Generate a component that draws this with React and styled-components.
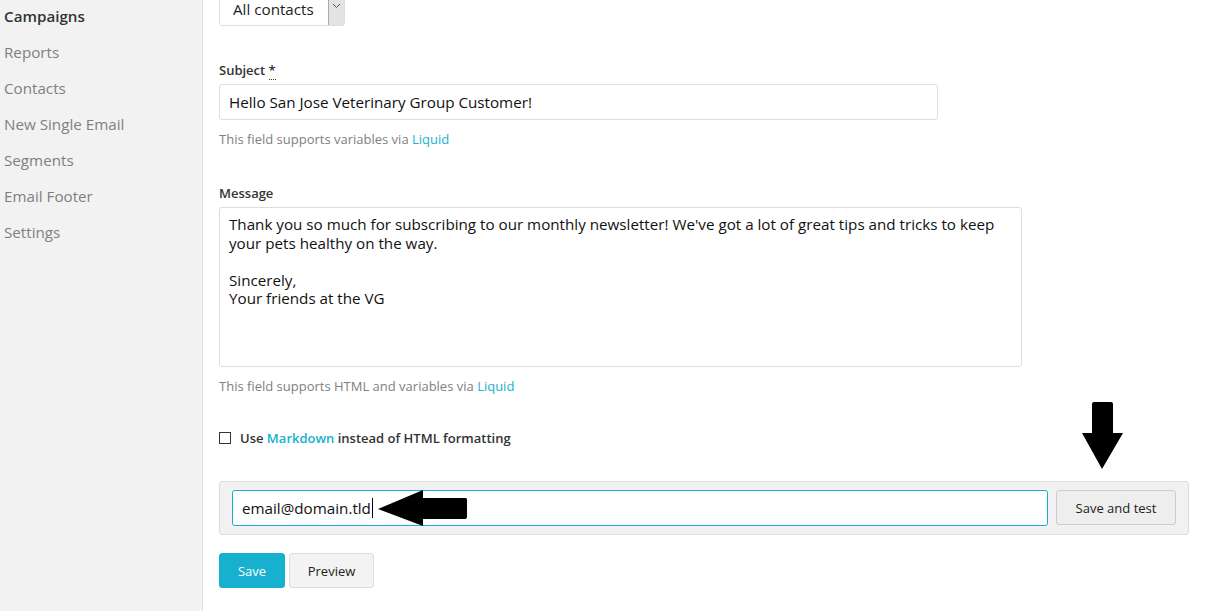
import React from 'react';
import styled, {createGlobalStyle} from "styled-components";

const teal = "#17b1cf";

const GlobalStyle = createGlobalStyle`
body{
margin:0;
background:#fff;
font-family: "Open Sans", "Noto Sans", sans-serif;
color:#222;
overflow:hidden;
}
`

const menu = ["Campaigns", "Reports", "Contacts", "New Single Email", "Segments", "Email Footer", "Settings"]

const App = () => {
    return (
        <Page>
            <GlobalStyle/>
            <Sidebar>
                <Menu>
                    {menu.map((item, i) => (
                        <MenuItem key={item} active={i === 0}>{item}</MenuItem>
                    ))}
                </Menu>
            </Sidebar>
            <Main>
                <SelectBox>
                    <SelectText>All contacts</SelectText>
                    <SelectArrow>
                        <svg width="9" height="6" viewBox="0 0 9 6">
                            <path d="M1 1 L4.5 4.5 L8 1" fill="none" stroke="#555" strokeWidth="1"/>
                        </svg>
                    </SelectArrow>
                </SelectBox>

                <Group>
                    <Label>Subject <Abbr>*</Abbr></Label>
                    <Input width={719}>Hello San Jose Veterinary Group Customer!</Input>
                    <Help>This field supports variables via <Link>Liquid</Link></Help>
                </Group>

                <Group>
                    <Label>Message</Label>
                    <TextArea>
                        Thank you so much for subscribing to our monthly newsletter! We've got a lot of great tips and tricks to keep your pets healthy on the way.
                        {"\n\n"}Sincerely,{"\n"}Your friends at the VG
                    </TextArea>
                    <Help>This field supports HTML and variables via <Link>Liquid</Link></Help>
                </Group>

                <CheckRow>
                    <CheckBox/>
                    <span>Use <Link>Markdown</Link> instead of HTML formatting</span>
                </CheckRow>

                <TestPanel>
                    <TestInput>email@domain.tld<Caret/></TestInput>
                    <Button width={120}>Save and test</Button>
                </TestPanel>

                <Actions>
                    <Button primary width={66}>Save</Button>
                    <Button width={85}>Preview</Button>
                </Actions>
            </Main>

            <ArrowLeft width="90" height="36" viewBox="0 0 90 36">
                <path d="M0 19 L45 0 L45 8 L88 8 Q89 8 89 10 L89 27 Q89 29 87 29 L45 29 L45 36 Z" fill="#000"/>
            </ArrowLeft>
            <ArrowDown width="42" height="70" viewBox="0 0 42 70">
                <path d="M10 2 Q10 0 12 0 L29 0 Q31 0 31 2 L31 31 L41 31 L20 67 L0 31 L10 31 Z" fill="#000"/>
            </ArrowDown>
        </Page>
    );
};

const Page = styled.div`
display:flex;
position:relative;
min-height:100vh;
`
const Sidebar = styled.div`
width:202px;
flex-shrink:0;
background:#f2f2f2;
border-right:1px solid #e2e2e2;
`
const Menu = styled.div`
display:flex;
flex-direction:column;
margin-top:-2px;
`
const MenuItem = styled.div`
height:36px;
line-height:36px;
padding-left:4px;
font-size:15.2px;
color:${props => props.active ? "#333" : "#808080"};
font-weight:${props => props.active ? 600 : 400};
`
const Main = styled.div`
display:flex;
flex-direction:column;
align-items:flex-start;
padding-left:16px;
margin-top:-8px;
`
const SelectBox = styled.div`
display:flex;
width:126px;
height:34px;
box-sizing:border-box;
border:1px solid #ddd;
border-radius:3px;
`
const SelectText = styled.div`
flex:1;
font-size:15.2px;
line-height:32px;
padding-left:13px;
color:#222;
`
const SelectArrow = styled.div`
width:16px;
background:#e3e3e3;
border-left:1px solid #aaa;
display:flex;
justify-content:center;
padding-top:10px;
box-sizing:border-box;
`
const Group = styled.div`
display:flex;
flex-direction:column;
margin-top:35px;
&+&{
margin-top:36px;
}
`
const Label = styled.div`
font-size:13px;
font-weight:600;
line-height:18px;
color:#333;
margin-bottom:5px;
`
const Abbr = styled.span`
border-bottom:1px dotted #333;
`
const Input = styled.div`
width:${props => props.width}px;
height:36px;
box-sizing:border-box;
border:1px solid #ddd;
border-radius:3px;
padding:0 9px;
font-size:15.2px;
line-height:34px;
color:#111;
`
const TextArea = styled.div`
width:803px;
height:160px;
box-sizing:border-box;
border:1px solid #ddd;
border-radius:3px;
padding:7px 9px;
font-size:15.2px;
line-height:18.5px;
white-space:pre-line;
color:#111;
`
const Help = styled.div`
font-size:13px;
line-height:18px;
color:#808080;
margin-top:10px;
`
const Link = styled.span`
color:${teal};
`
const CheckRow = styled.div`
display:flex;
align-items:center;
gap:9px;
margin-top:34px;
font-size:13px;
font-weight:600;
line-height:18px;
color:#333;
`
const CheckBox = styled.div`
width:12px;
height:12px;
border:1px solid #333;
box-sizing:border-box;
`
const TestPanel = styled.div`
display:flex;
gap:8px;
width:970px;
box-sizing:border-box;
margin-top:34px;
padding:8px 12px;
background:#f1f1f1;
border:1px solid #ddd;
border-radius:3px;
`
const TestInput = styled.div`
flex:1;
display:flex;
align-items:center;
height:36px;
box-sizing:border-box;
border:1px solid ${teal};
border-radius:3px;
background:#fff;
padding:0 9px;
font-size:15.2px;
color:#111;
`
const Caret = styled.span`
width:1px;
height:20px;
background:#000;
margin-left:1px;
`
const Button = styled.div`
width:${props => props.width}px;
height:35px;
box-sizing:border-box;
display:flex;
align-items:center;
justify-content:center;
font-size:13px;
border-radius:3px;
border:1px solid ${props => props.primary ? teal : "#ccc"};
background:${props => props.primary ? teal : "#eee"};
color:${props => props.primary ? "#fff" : "#222"};
`
const Actions = styled.div`
display:flex;
gap:4px;
margin-top:18px;
& > div:last-child{
background:#f3f3f3;
border-color:#ddd;
}
`
const ArrowLeft = styled.svg`
position:absolute;
left:378px;
top:490px;
`
const ArrowDown = styled.svg`
position:absolute;
left:1082px;
top:402px;
`

export default App;
